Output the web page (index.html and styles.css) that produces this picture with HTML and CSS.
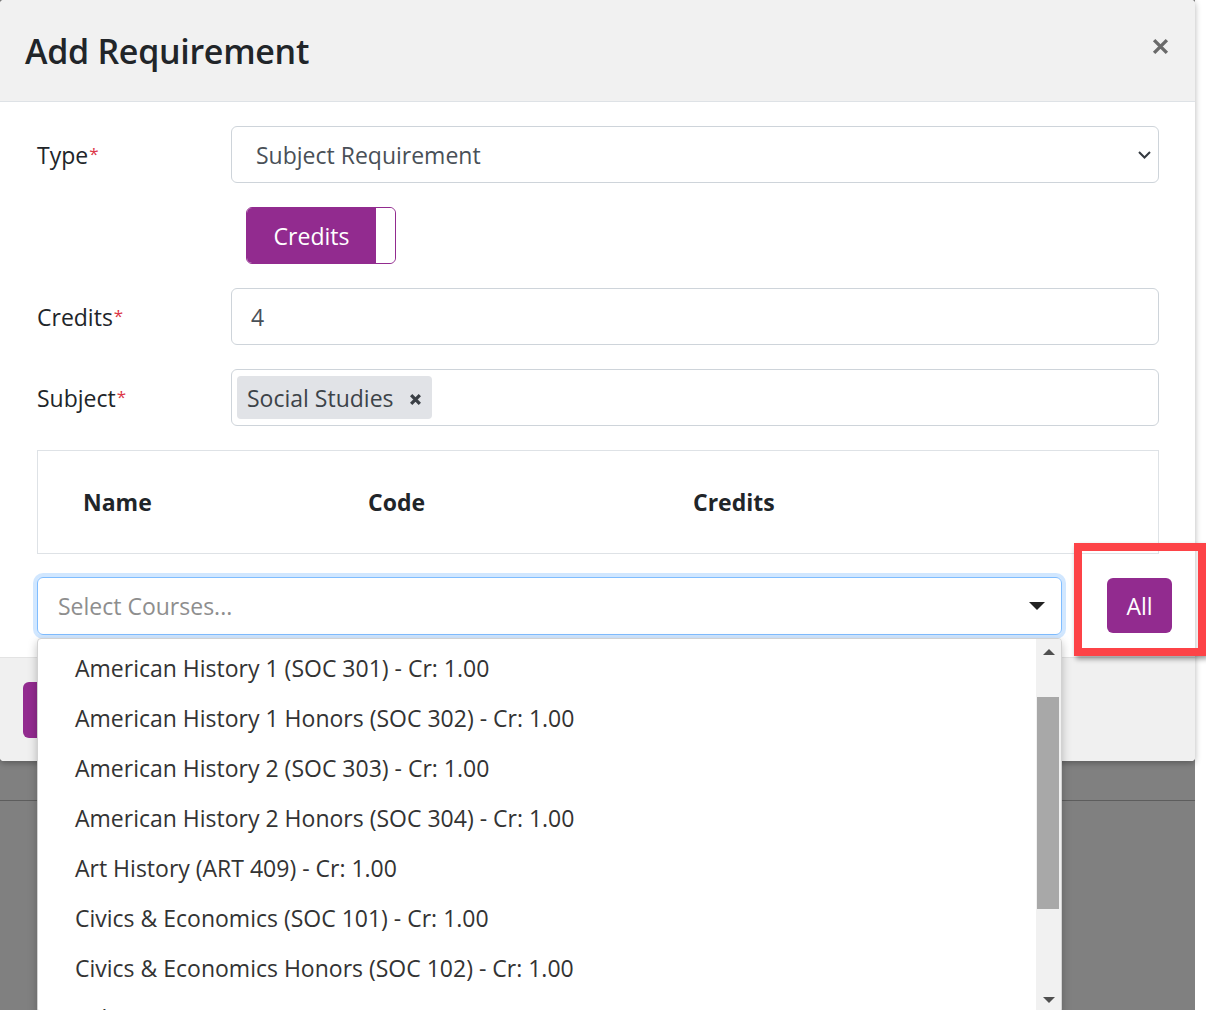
FILE: index.html
```html
<!DOCTYPE html>
<html lang="en">

<head>
  <meta charset="UTF-8" />
  <meta name="viewport" content="width=device-width, initial-scale=1" />
  <title>Add Requirement</title>
  <link rel="stylesheet" href="styles.css">
</head>

<body>
  <div class="screen">
    <div class="modal">
      <div class="modal-header">
        <h4 class="modal-title">Add Requirement</h4>
        <button class="close" aria-label="Close">
          <svg width="17" height="17" viewBox="0 0 16 16">
            <path d="M2 2L14 14M14 2L2 14" stroke="#6a6a6a" stroke-width="3.2" />
          </svg>
        </button>
      </div>

      <div class="modal-body">
        <div class="form-row">
          <label class="form-label">Type<span class="req">*</span></label>
          <div class="form-control select">
            <span>Subject Requirement</span>
            <svg width="13" height="8" viewBox="0 0 13 8">
              <path d="M1 1l5.5 5.5L12 1" fill="none" stroke="#343a40" stroke-width="2" />
            </svg>
          </div>
        </div>

        <div class="form-row">
          <span class="form-label"></span>
          <div class="toggle">
            <span class="toggle-on">Credits</span>
            <span class="toggle-handle"></span>
          </div>
        </div>

        <div class="form-row">
          <label class="form-label">Credits<span class="req">*</span></label>
          <div class="form-control number">4</div>
        </div>

        <div class="form-row">
          <label class="form-label">Subject<span class="req">*</span></label>
          <div class="form-control tags">
            <span class="tag">Social Studies
              <svg width="13" height="13" viewBox="0 0 12 12">
                <path d="M2 2L10 10M10 2L2 10" stroke="#3a3f45" stroke-width="3" />
              </svg>
            </span>
          </div>
        </div>

        <div class="course-table">
          <span>Name</span>
          <span>Code</span>
          <span>Credits</span>
        </div>

        <div class="picker-row">
          <div class="picker">
            <div class="picker-input">
              <span>Select Courses...</span>
              <span class="caret"></span>
            </div>
            <div class="picker-menu">
              <ul class="menu-list">
                <li>American History 1 (SOC 301) - Cr: 1.00</li>
                <li>American History 1 Honors (SOC 302) - Cr: 1.00</li>
                <li>American History 2 (SOC 303) - Cr: 1.00</li>
                <li>American History 2 Honors (SOC 304) - Cr: 1.00</li>
                <li>Art History (ART 409) - Cr: 1.00</li>
                <li>Civics &amp; Economics (SOC 101) - Cr: 1.00</li>
                <li>Civics &amp; Economics Honors (SOC 102) - Cr: 1.00</li>
                <li>Military History (ROTC 101) - Cr: 1.00</li>
              </ul>
              <div class="scrollbar">
                <span class="arrow up"></span>
                <div class="track"><div class="thumb"></div></div>
                <span class="arrow down"></span>
              </div>
            </div>
          </div>
          <button class="btn-all">All</button>
          <div class="highlight"></div>
        </div>
      </div>

      <div class="modal-footer">
        <button class="btn-save" aria-label="Save"></button>
      </div>
    </div>
    <div class="behind"></div>
  </div>
</body>

</html>
```

FILE: styles.css
```css
html,
body {
  margin: 0;
  height: 100%;
  overflow: hidden;
  background-color: #fff;
}

body {
  font-family: "Open Sans", "Noto Sans", sans-serif;
  color: #212529;
}

.screen {
  width: 1195px;
  height: 1010px;
  background-color: #808080;
}

.modal {
  background-color: #fff;
  border-radius: 4px;
  box-shadow: 0 2px 6px rgba(0, 0, 0, 0.3);
}

.modal-header {
  height: 101px;
  border-bottom: 1px solid #dee2e6;
  background-color: #f1f1f1;
  border-radius: 4px 4px 0 0;
  display: flex;
  justify-content: space-between;
  align-items: center;
  padding: 0 26px 0 24px;
}

.modal-title {
  margin: 0 0 0 1px;
  font-size: 34px;
  font-weight: 600;
  color: #212529;
  letter-spacing: -0.3px;
}

.close {
  align-self: flex-start;
  margin-top: 38px;
  padding: 0;
  border: 0;
  background: none;
  line-height: 0;
}

.modal-body {
  padding: 24px 36px 22px 37px;
}

.form-row {
  display: flex;
  align-items: center;
  height: 57px;
  margin-bottom: 24px;
}

.form-label {
  width: 194px;
  flex-shrink: 0;
  font-size: 23px;
  color: #212529;
}

.req {
  position: relative;
  top: -4px;
  margin-left: 1px;
  font-size: 17px;
  color: #dc3545;
}

.form-control {
  flex: 1;
  height: 57px;
  box-sizing: border-box;
  border: 1px solid #ced4da;
  border-radius: 6px;
  padding: 0 24px;
  display: flex;
  align-items: center;
  font-size: 23px;
  color: #495057;
}

.select {
  justify-content: space-between;
  padding-right: 7px;
}

.number {
  padding-left: 19px;
}

.tags {
  padding-left: 5px;
}

.tag {
  height: 43px;
  display: flex;
  align-items: center;
  gap: 15px;
  padding: 0 10px 0 10px;
  background-color: #e1e3e7;
  border-radius: 4px;
  color: #3d4349;
}

.tag svg {
  margin-top: 4px;
}

.toggle {
  margin-left: 15px;
  width: 150px;
  height: 57px;
  box-sizing: border-box;
  border: 1px solid #922b8f;
  border-radius: 6px;
  overflow: hidden;
  display: flex;
}

.toggle-on {
  flex: 1;
  background-color: #922b8f;
  color: #fff;
  font-size: 23px;
  display: flex;
  align-items: center;
  justify-content: center;
}

.toggle-handle {
  width: 19px;
  background-color: #fff;
  border-radius: 5px;
}

.course-table {
  height: 104px;
  box-sizing: border-box;
  border: 1px solid #dee2e6;
  margin-bottom: 23px;
  padding-left: 45px;
  display: grid;
  grid-template-columns: 285px 325px 1fr;
  align-items: center;
  font-size: 23px;
  font-weight: 700;
  color: #212529;
}

.picker-row {
  position: relative;
  display: flex;
  align-items: flex-start;
}

.picker {
  position: relative;
  width: 1025px;
  flex-shrink: 0;
}

.picker-input {
  height: 58px;
  box-sizing: border-box;
  border: 1px solid #80bdff;
  border-radius: 6px;
  box-shadow: 0 0 0 4px rgba(0, 123, 255, 0.18);
  display: flex;
  justify-content: space-between;
  align-items: center;
  padding: 0 16px 0 20px;
  font-size: 23px;
  color: #8e8e8e;
}

.caret {
  border-left: 8px solid transparent;
  border-right: 8px solid transparent;
  border-top: 8px solid #222;
}

.picker-menu {
  position: absolute;
  top: 61px;
  left: 0;
  width: 100%;
  height: 375px;
  box-sizing: border-box;
  background-color: #fff;
  border: 1px solid #d2d2d2;
  border-radius: 4px;
  box-shadow: 0 4px 10px rgba(0, 0, 0, 0.25);
  display: flex;
  overflow: hidden;
  z-index: 2;
}

.menu-list {
  flex: 1;
  list-style: none;
  margin: 0;
  padding: 4px 0 0;
}

.menu-list li {
  height: 50px;
  line-height: 50px;
  padding-left: 37px;
  font-size: 23px;
  color: #333;
  white-space: nowrap;
}

.scrollbar {
  width: 25px;
  background-color: #f1f1f1;
  display: flex;
  flex-direction: column;
  align-items: center;
}

.arrow {
  height: 25px;
  width: 25px;
  display: flex;
  justify-content: center;
  align-items: center;
}

.arrow::before {
  content: "";
  border-left: 6px solid transparent;
  border-right: 6px solid transparent;
}

.arrow.up::before {
  border-bottom: 6px solid #505050;
}

.arrow.down::before {
  border-top: 6px solid #505050;
}

.track {
  flex: 1;
  width: 100%;
}

.thumb {
  margin: 33px 2px 0 1px;
  height: 212px;
  background-color: #a8a8a8;
}

.btn-all {
  flex-shrink: 0;
  margin-left: 45px;
  margin-top: 1px;
  width: 65px;
  height: 55px;
  border: 0;
  border-radius: 6px;
  background-color: #922b8f;
  color: #fff;
  font-family: inherit;
  font-size: 23px;
}

.highlight {
  position: absolute;
  left: 1037px;
  top: -34px;
  width: 132px;
  height: 113px;
  box-sizing: border-box;
  border: 8px solid #fd4347;
  box-shadow: 2px 3px 5px rgba(0, 0, 0, 0.4);
}

.modal-footer {
  height: 104px;
  box-sizing: border-box;
  background-color: #f0f0f0;
  border-top: 1px solid #e3e3e3;
  border-radius: 0 0 4px 4px;
  padding: 24px 23px;
}

.btn-save {
  height: 56px;
  width: 120px;
  border: 0;
  border-radius: 6px;
  background-color: #922b8f;
}

.behind {
  height: 39px;
  border-bottom: 1px solid #5d5d5d;
}
```
